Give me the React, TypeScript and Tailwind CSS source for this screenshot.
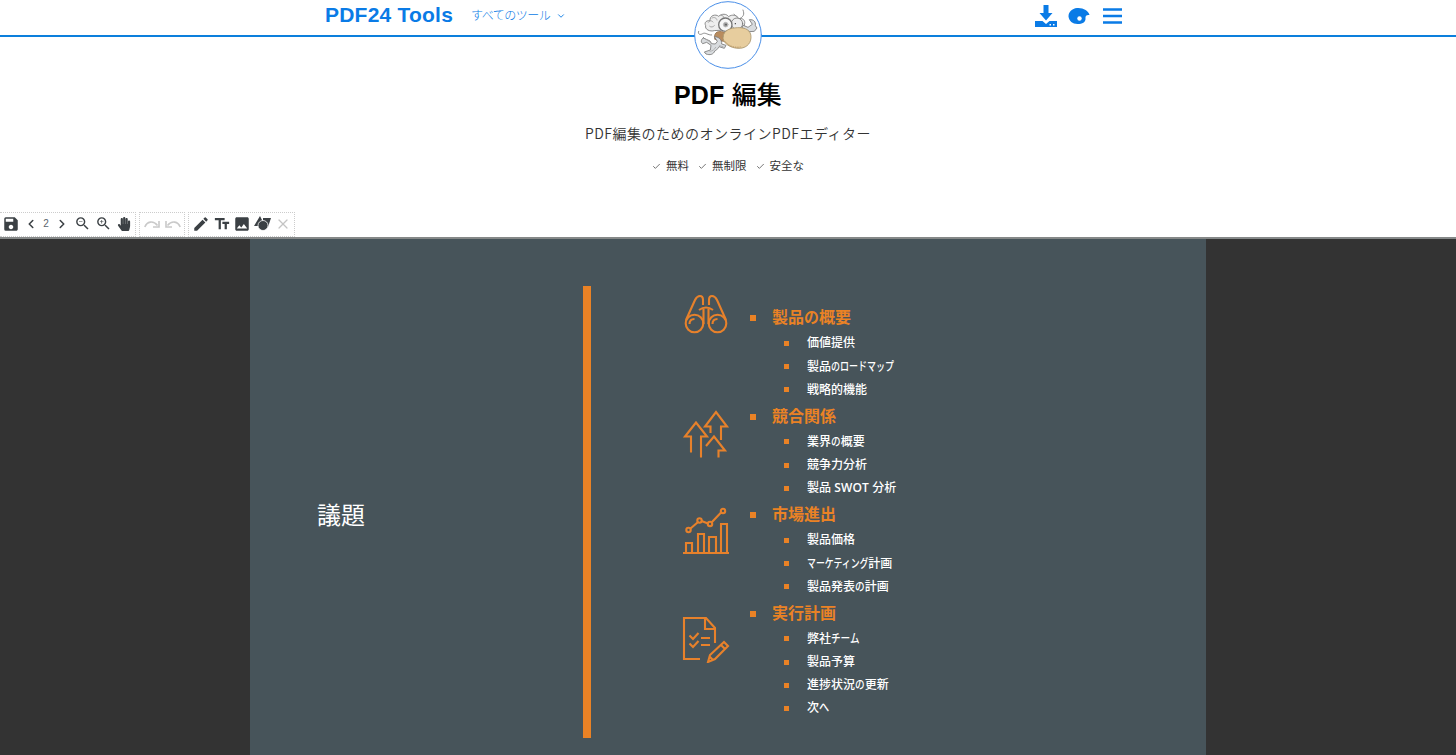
import type { ReactNode } from 'react';
import {
  MdEdit,
  MdImage,
  MdSave,
  MdTextFields,
  MdZoomIn,
  MdZoomOut,
} from 'react-icons/md';
import { FaHandPaper } from 'react-icons/fa';
import { Check, ChevronDown, ChevronLeft, ChevronRight, X } from 'lucide-react';

// kana: width of the kana relative to the kanji beside them
type Item = { text: string; kana?: number };

const agenda: { title: string; items: Item[] }[] = [
  {
    title: '製品の概要',
    items: [
      { text: '価値提供' },
      { text: '製品のロードマップ', kana: 0.75 },
      { text: '戦略的機能' },
    ],
  },
  {
    title: '競合関係',
    items: [
      { text: '業界の概要' },
      { text: '競争力分析' },
      { text: '製品 SWOT 分析' },
    ],
  },
  {
    title: '市場進出',
    items: [
      { text: '製品価格' },
      { text: 'マーケティング計画', kana: 0.74 },
      { text: '製品発表の計画' },
    ],
  },
  {
    title: '実行計画',
    items: [
      { text: '弊社チーム' },
      { text: '製品予算' },
      { text: '進捗状況の更新' },
      { text: '次へ', kana: 0.85 },
    ],
  },
];

function CondensedText({ text, kana = 0.8 }: { text: string; kana?: number }) {
  return (
    <>
      {text.split(/([\u3040-\u30ff]+)/).filter(Boolean).map((run, i) =>
        /[\u3040-\u30ff]/.test(run) ? (
          <span
            key={i}
            className="inline-block origin-left"
            style={{ transform: `scaleX(${kana})`, marginRight: `${-(1 - kana) * run.length}em` }}
          >
            {run}
          </span>
        ) : (
          <span key={i}>
            {run.split(/([A-Z]+)/).map((part, j) =>
              /[A-Z]/.test(part) ? (
                <span key={j} className="font-['Open_Sans',sans-serif] font-semibold tracking-[0.1px]">{part}</span>
              ) : (
                part
              ),
            )}
          </span>
        ),
      )}
    </>
  );
}

function Logo() {
  return (
    <svg className="block h-[68px] w-[68px]" viewBox="43 5 204 204" fill="none" stroke="#777" strokeWidth="2.5" strokeLinecap="round">
      <circle cx="145" cy="107" r="100" fill="#fff" stroke="#4a8fe8" strokeWidth="3" />
      <path d="M57 96c-4 8 4 12 12 7s16 5 27 4M190 32c5 14 2 20-12 27M163 45l9 8" />
      <path d="M104 94c-14 4-29-4-26-15-6-11 5-17 13-14-2-17 17-22 26-14 9-9 24-8 30 1 9-8 26-5 30 6 12-3 20 5 18 15l-4 16z" fill="#eee" />
      <path d="M86 69c4-6 10-6 14-1m-3-12c7-4 14 0 15 6m-22 19c5 4 10 2 14-2m20-31c6-1 8 4 9 8" stroke="#999" />
      <path d="M105 108c3-14 17-13 31-9l3 28-19-3-14-4z" fill="#b98c5e" stroke="#967451" />
      <path d="M71 116l20 9 4 8 12 1 6-8-9-14c12 0 23 8 22 22l13 4-5 9-16-5c-6 10-9 11-12 12-5 12-15 14-27 10l-5-6 18-6 2-14-13-9-12 4c-7-6-4-13 2-18z" fill="#d9dcdf" />
      <path d="M77 119l18 11m-4 26c8-1 13-5 17-12m12-5l10 3" stroke="#aaa" />
      <path d="M191 78l14 6 13-9-9-14c13-1 20 6 18 18l5 7-8 10-16 1-20-11z" fill="#d9dcdf" />
      <circle cx="172" cy="73" r="17" fill="#eee" />
      <circle cx="137" cy="76" r="20" fill="#f7f7f7" strokeWidth="4" />
      <circle cx="138" cy="76" r="7" fill="#999" stroke="#bbb" />
      <circle cx="139" cy="76" r="2" fill="#333" stroke="none" />
      <circle cx="167" cy="73" r="2" fill="#333" stroke="none" />
      <path d="M130 112c3-20 21-26 44-27 24-1 41 8 40 30-1 21-18 33-39 32-24-1-47-16-45-35z" fill="#e7cd9e" stroke="#a8946b" />
      <path d="M137 127c10 13 27 19 45 16" stroke="#b18d5c" strokeDasharray="2 5" />
    </svg>
  );
}

function Header() {
  return (
    <header className="relative flex h-[37px] items-start justify-between border-b-2 border-[#0c7fdc] pr-[334px] pl-[325px] text-[#0a7be6]">
      <div className="flex items-center">
        <span className="h-[29px] w-[128px] text-[21px] leading-[29px] font-bold tracking-[0.22px] whitespace-nowrap">PDF24 Tools</span>
        <span className="ml-[18px] w-[80px] pt-[1px] font-['Noto_Sans_CJK_JP',sans-serif] text-[12px] leading-[18px] font-light tracking-[-0.5px] whitespace-nowrap">
          すべてのツール
        </span>
        <ChevronDown className="mt-[3px] ml-[5px] size-[10px]" strokeWidth={2.2} />
      </div>
      <div className="flex h-[32px] items-center">
        <svg className="h-[24px] w-[22px]" viewBox="0 0 22 24" fill="currentColor">
          <path d="M8.500 1h5v8h4L11 16.500 4.500 9h4z" />
          <path d="M0 17h7.500l3.500 3 3.500-3H22v6H0z" />
          <path d="M14.500 20H16v1.500h-1.500zM18 20h1.500v1.500H18z" fill="#fff" />
        </svg>
        <svg className="ml-[11px] h-[18px] w-[22px]" viewBox="0 0 22 18">
          <path d="M9 1C4 1.500.5 5 .5 9.500 1 14 4.500 17 9.500 17c5 0 8-2 8-5 0-3 0-4 4-4C20.500 3.500 15 .5 9 1z" fill="currentColor" />
          <circle cx="11.500" cy="11.500" r="2.200" fill="#fff" />
        </svg>
        <svg className="ml-[13px] h-[16px] w-[19px]" viewBox="0 0 19 16" stroke="currentColor" strokeWidth="2.600">
          <path d="M0 1.500h19M0 8h19M0 14.500h19" />
        </svg>
      </div>
      <div className="absolute top-[1px] left-[694px]">
        <Logo />
      </div>
    </header>
  );
}

function Intro() {
  return (
    <section className="flex h-[175px] flex-col items-center pt-[39px] text-[#333]">
      <h1 className="h-[38px] text-[25px] leading-[38px] font-bold tracking-[0.2px] whitespace-nowrap text-black">
        PDF <span className="font-medium">編集</span>
      </h1>
      <p className="mt-[8px] h-[22px] font-['Noto_Sans_CJK_JP',sans-serif] text-[14px] leading-[22px] font-[350] tracking-[0.5px] whitespace-nowrap">
        PDF編集のためのオンラインPDFエディター
      </p>
      <ul className="mt-[13px] flex h-[20px] items-center gap-[9px] text-[11.500px]">
        {['無料', '無制限', '安全な'].map((label) => (
          <li key={label} className="flex items-center gap-[5px]">
            <Check className="mb-[2px] size-[9px] text-[#666]" strokeWidth={2.4} />
            {label}
          </li>
        ))}
      </ul>
    </section>
  );
}

function ToolGroup({ className, children }: { className: string; children: ReactNode }) {
  return (
    <div className={`flex h-[25px] shrink-0 items-center border border-dotted border-[#ccc] pb-[2px] ${className}`}>
      {children}
    </div>
  );
}

function RedoIcon({ className = '' }: { className?: string }) {
  return (
    <svg className={`h-[10px] w-[16px] ${className}`} viewBox="0 0 16 10" fill="none" stroke="#c9c9c9" strokeWidth="1.600">
      <path d="M.8 8C3 2.500 9 1 13.500 6.500" />
      <path d="M15 2v6H9" />
    </svg>
  );
}

function Toolbar() {
  return (
    <div className="flex h-[25px] gap-[3px] text-[#3b4044]">
      <ToolGroup className="w-[136px] border-l-0 pl-[2px]">
        <MdSave className="size-[18px]" />
        <ChevronLeft className="ml-[4px] size-[14px]" strokeWidth={2.7} />
        <span className="w-[16px] text-center text-[10px] text-[#59646d]">2</span>
        <ChevronRight className="ml-px size-[14px]" strokeWidth={2.7} />
        <MdZoomOut className="ml-[5px] size-[17px]" />
        <MdZoomIn className="ml-[4px] size-[17px]" />
        <FaHandPaper className="ml-[5px] size-[14px]" />
      </ToolGroup>
      <ToolGroup className="w-[46px] justify-center gap-[5px]">
        <RedoIcon />
        <RedoIcon className="-scale-x-100" />
      </ToolGroup>
      <ToolGroup className="w-[107px] pl-[3px]">
        <MdEdit className="size-[18px]" />
        <MdTextFields className="ml-[3px] size-[18px]" />
        <MdImage className="ml-[2px] size-[18px]" />
        <svg className="ml-[3px] h-[15px] w-[17px]" viewBox="0 0 17 15" fill="currentColor">
          <path d="M6 0l5 10H0zM9 2h8l-3 9H9z" />
          <circle cx="9" cy="9.500" r="5" stroke="#fff" strokeWidth=".8" />
        </svg>
        <X className="ml-[4px] size-[16px] text-[#c4c4c4]" strokeWidth={1.8} />
      </ToolGroup>
    </div>
  );
}

function SlideIcon({ children }: { children: ReactNode }) {
  return (
    <svg className="block h-[50px] w-[50px]" viewBox="0 0 50 50" fill="none" stroke="#e7812b" strokeWidth="2.100">
      {children}
    </svg>
  );
}

function SlideIcons() {
  return (
    <div className="flex w-[50px] flex-col pt-[50px]">
      <SlideIcon>
        <circle cx="13.500" cy="34.500" r="8.800" />
        <circle cx="36.500" cy="34.500" r="8.800" />
        <path d="M5 31L14 11q2-4 5-4t3 4v5M45 31L36 11q-2-4-5-4t-3 4v5M22.500 35V20M27.500 35V20M18 21q7-5 14 0M8.500 35q0-5 5-5M31.500 35q0-5 5-5" />
      </SlideIcon>
      <div className="mt-[70px]">
        <SlideIcon>
          <path d="M10 43.500V27.500H4L15 13.500l11 14h-6v21M29.500 24v-6.500H24L35 3l11 14.500h-6V31M25 37l8-9.500L44 41.500h-6.500v7" />
        </SlideIcon>
      </div>
      <div className="mt-[48px]">
        <SlideIcon>
          <path d="M2 46h46M5 46V36h6v10M17 46V27h6v19M28 46V30h7v16M40 46V17h6v29M9.500 21.500l7-6M20.500 14l6.500 2.500M31 15l9.500-10" />
          <circle cx="7.500" cy="23" r="2.200" />
          <circle cx="18.500" cy="13.500" r="2.200" />
          <circle cx="29" cy="17" r="2.200" />
          <circle cx="42" cy="4" r="2.200" />
        </SlideIcon>
      </div>
      <div className="mt-[56px]">
        <SlideIcon>
          <path d="M19 46H3V5h22l9 10v15M24 5v11h10M8.500 22.500l3.500 3.500 5.500-6M8.500 30.500L12 34l5.500-6M20 25h9M20 32h9" />
          <path d="M27 49l2-7 14-13 4 4-13 13zM28 43l4 4M40 32l4 4" />
        </SlideIcon>
      </div>
    </div>
  );
}

function Slide() {
  return (
    <div className="flex h-[516px] w-[956px] bg-[#47545a]">
      <div className="flex w-[333px] items-center pt-[38px] pl-[67px]">
        <h2 className="text-[24px] leading-[36px] text-white">議題</h2>
      </div>
      <div className="mt-[47px] h-[452px] w-[8px] bg-[#ea8225]" />
      <div className="ml-[90px]">
        <SlideIcons />
      </div>
      <ul className="ml-[19px] pt-[64px]">
        {agenda.map((section) => (
          <li key={section.title}>
            <div className="flex h-[28.900px] items-center">
              <span className="mt-[2px] mr-[16px] size-[6px] bg-[#ea8225]" />
              <h3 className="mt-[2px] text-[16px] leading-[24px] font-bold whitespace-nowrap text-[#ea8225]">
                <CondensedText text={section.title} kana={0.93} />
              </h3>
            </div>
            <ul className="pl-[34px]">
              {section.items.map((item) => (
                <li key={item.text} className="flex h-[23.200px] items-center">
                  <span className="mr-[18px] size-[5px] bg-[#ea8225]" />
                  <span className="text-[12px] leading-[18px] font-medium whitespace-nowrap text-white">
                    <CondensedText text={item.text} kana={item.kana} />
                  </span>
                </li>
              ))}
            </ul>
          </li>
        ))}
      </ul>
    </div>
  );
}

export default function App() {
  return (
    <div className="h-[755px] w-[1456px] overflow-hidden bg-white font-['Liberation_Sans','Noto_Sans_CJK_JP',sans-serif]">
      <Header />
      <Intro />
      <Toolbar />
      <main className="flex h-[518px] justify-center border-t-2 border-[#858888] bg-[#333]">
        <Slide />
      </main>
    </div>
  );
}
